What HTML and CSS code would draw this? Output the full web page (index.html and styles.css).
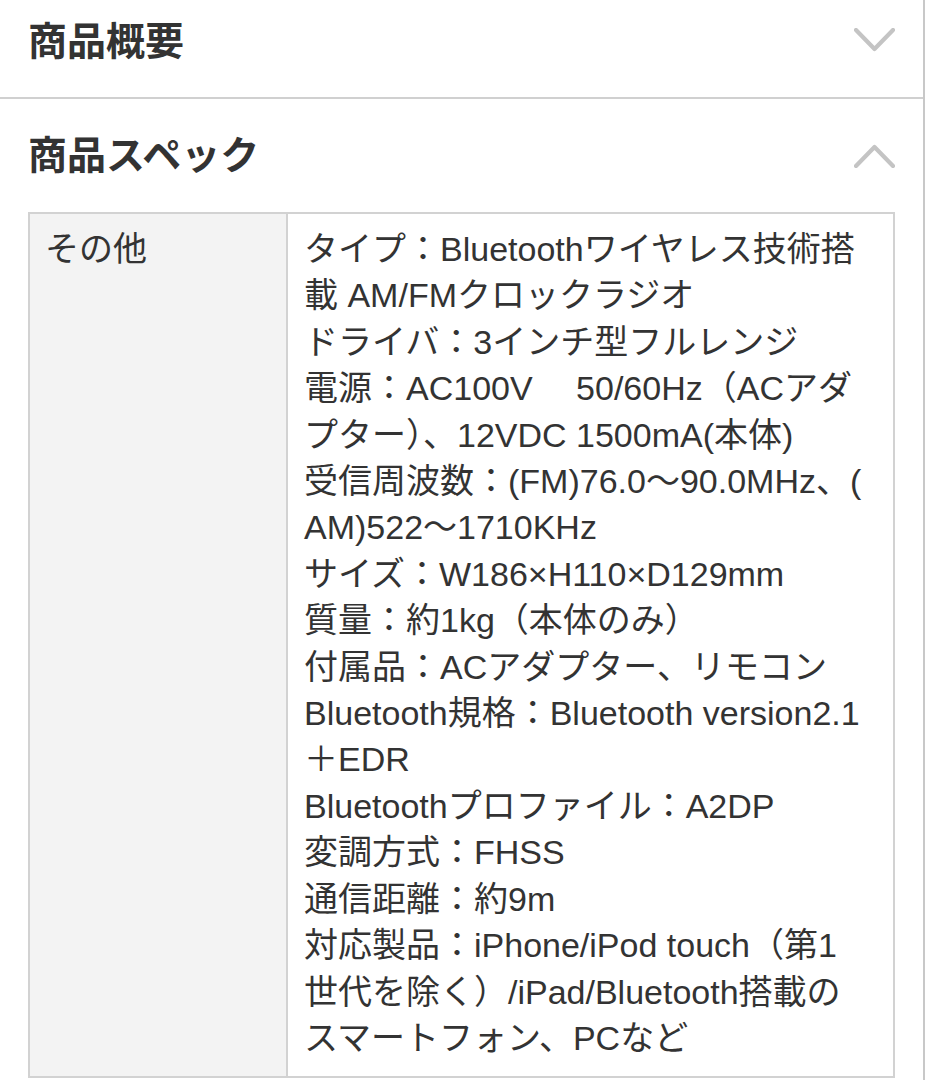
FILE: index.html
```html
<!DOCTYPE html>
<html lang="ja">
<head>
<meta charset="utf-8">
<title>商品スペック</title>
<link rel="stylesheet" href="styles.css">
</head>
<body>
<div class="page">
  <section class="acc acc-closed">
    <div class="acc-head">
      <h2 class="acc-title">商品概要</h2>
      <svg class="chev" width="41" height="24" viewBox="0 0 41 24"><polyline points="2,2 20.5,21 39,2" fill="none" stroke="#c4c4c4" stroke-width="4.2" stroke-linecap="round" stroke-linejoin="round"/></svg>
    </div>
  </section>
  <section class="acc acc-open">
    <div class="acc-head">
      <h2 class="acc-title">商品スペック</h2>
      <svg class="chev" width="41" height="24" viewBox="0 0 41 24"><polyline points="2,22 20.5,3 39,22" fill="none" stroke="#c4c4c4" stroke-width="4.2" stroke-linecap="round" stroke-linejoin="round"/></svg>
    </div>
    <div class="spec">
      <div class="spec-key">その他</div>
      <div class="spec-val">タイプ：Bluetoothワイヤレス技術搭<br>載 AM/FMクロックラジオ<br>ドライバ：3インチ型フルレンジ<br>電源：AC100V　 50/60Hz（ACアダ<br>プター）、12VDC 1500mA(本体)<br>受信周波数：(FM)76.0～90.0MHz、(<br>AM)522～1710KHz<br>サイズ：W186×H110×D129mm<br>質量：約1kg（本体のみ）<br>付属品：ACアダプター、リモコン<br>Bluetooth規格：Bluetooth version2.1<br>＋EDR<br>Bluetoothプロファイル：A2DP<br>変調方式：FHSS<br>通信距離：約9m<br>対応製品：iPhone/iPod touch（第1<br>世代を除く）/iPad/Bluetooth搭載の<br>スマートフォン、PCなど</div>
    </div>
  </section>
</div>
</body>
</html>
```

FILE: styles.css
```css
* { box-sizing: border-box; }
html, body { margin: 0; padding: 0; background: #fff; }
body {
  font-family: "Liberation Sans", "Noto Sans CJK JP", sans-serif;
  color: #333;
}
.page {
  width: 925px;
  min-height: 1080px;
  border-right: 2px solid #c8c8c8;
}
.acc-closed {
  height: 99px;
  border-bottom: 2px solid #d0d0d0;
  padding: 15px 0 0;
}
.acc-open {
  padding: 30px 0 0;
}
.acc-head {
  display: flex;
  align-items: center;
  justify-content: space-between;
  padding: 0 28px 0 28px;
  height: 46px;
}
.acc-title {
  margin: 0;
  font-family: "Noto Sans CJK JP", sans-serif;
  font-weight: 700;
  font-size: 39px;
  line-height: 46px;
  color: #333;
}
.acc-closed .chev { margin-top: 4px; }
.acc-open .chev { margin-top: 8px; }
.spec {
  margin: 37px 28px 0 28px;
  border: 2px solid #d2d2d2;
  display: grid;
  grid-template-columns: 258px 1fr;
}
.spec-key {
  background: #f3f3f3;
  border-right: 2px solid #d2d2d2;
  padding: 12px 15px;
  font-size: 34px;
  line-height: 46.4px;
}
.spec-val {
  background: #fff;
  padding: 12px 8px 15px 16px;
  font-size: 34px;
  line-height: 46.4px;
  white-space: nowrap;
}
```
